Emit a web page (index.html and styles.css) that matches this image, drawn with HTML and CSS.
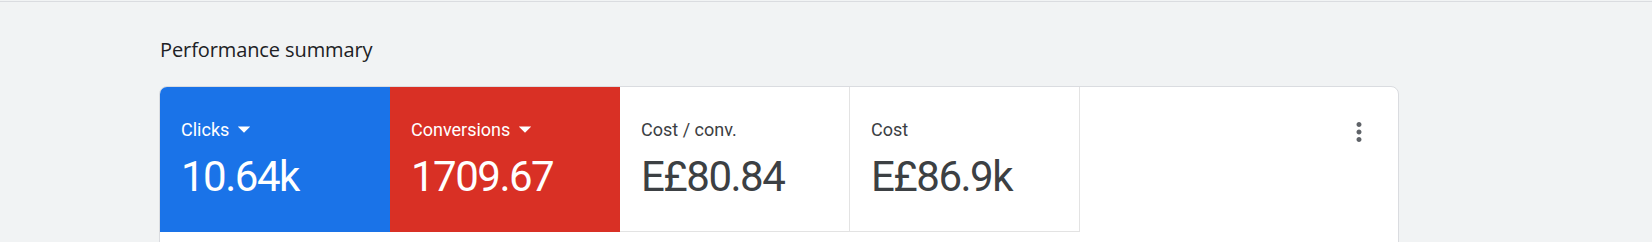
FILE: index.html
```html
<!DOCTYPE html>
<html lang="en">
<head>
<meta charset="utf-8">
<title>Performance summary</title>
<link rel="stylesheet" href="styles.css">
</head>
<body>
<div class="topbar"></div>
<main class="main">
  <h2 class="title">Performance summary</h2>
  <section class="card">
    <div class="tiles">
      <div class="tile tile-blue">
        <div class="label">Clicks
          <svg class="drop" viewBox="0 0 24 24" width="30" height="30"><path d="M7 10l5 5 5-5z" fill="currentColor"/></svg>
        </div>
        <div class="value">10.64k</div>
      </div>
      <div class="tile tile-red">
        <div class="label">Conversions
          <svg class="drop" viewBox="0 0 24 24" width="30" height="30"><path d="M7 10l5 5 5-5z" fill="currentColor"/></svg>
        </div>
        <div class="value">1709.67</div>
      </div>
      <div class="tile tile-white">
        <div class="label">Cost / conv.</div>
        <div class="value">E£80.84</div>
      </div>
      <div class="tile tile-white">
        <div class="label">Cost</div>
        <div class="value">E£86.9k</div>
      </div>
      <div class="spacer">
        <svg class="kebab" viewBox="0 0 24 24" width="30" height="30"><path d="M12 8c1.1 0 2-.9 2-2s-.9-2-2-2-2 .9-2 2 .9 2 2 2zm0 2c-1.1 0-2 .9-2 2s.9 2 2 2 2-.9 2-2-.9-2-2-2zm0 6c-1.1 0-2 .9-2 2s.9 2 2 2 2-.9 2-2-.9-2-2-2z" fill="currentColor"/></svg>
      </div>
    </div>
    <div class="card-body"></div>
  </section>
</main>
</body>
</html>
```
FILE: styles.css
```css
* { box-sizing: border-box; }
html, body {
  margin: 0;
  padding: 0;
  background: #f1f3f4;
}
body {
  font-family: Roboto, "Liberation Sans", sans-serif;
  color: #3c4043;
  overflow: hidden;
}
.topbar {
  height: 2px;
  border-bottom: 1px solid #dadce0;
}
.main {
  padding: 34px 0 0 159px;
}
.title {
  margin: 0;
  font-family: "Open Sans", Roboto, sans-serif;
  font-weight: 500;
  font-size: 20px;
  line-height: 28px;
  color: #202124;
  padding-left: 1px;
  letter-spacing: -0.1px;
}
.card {
  margin-top: 22px;
  width: 1240px;
  background: #fff;
  border: 1px solid #dadce0;
  border-radius: 8px;
  overflow: hidden;
}
.tiles {
  display: flex;
  height: 145px;
}
.tile {
  width: 230px;
  padding: 31px 0 0 21px;
}
.tile-blue { background: #1a73e8; color: #fff; }
.tile-red { background: #d93025; color: #fff; }
.tile-white {
  background: #fff;
  color: #3c4043;
  border-right: 1px solid #e3e3e3;
  border-bottom: 1px solid #e3e3e3;
}
.label {
  display: flex;
  align-items: center;
  height: 24px;
  font-size: 18px;
  line-height: 24px;
}
.drop {
  margin: -4px 0 -2px 0;
}
.value {
  margin-top: 11px;
  font-size: 42px;
  line-height: 48px;
  letter-spacing: -1.5px;
}
.spacer {
  flex: 1;
  display: flex;
  justify-content: flex-end;
  align-items: flex-start;
  padding: 30px 24px 0 0;
}
.kebab {
  color: #5f6368;
}
.card-body {
  height: 120px;
}
```
